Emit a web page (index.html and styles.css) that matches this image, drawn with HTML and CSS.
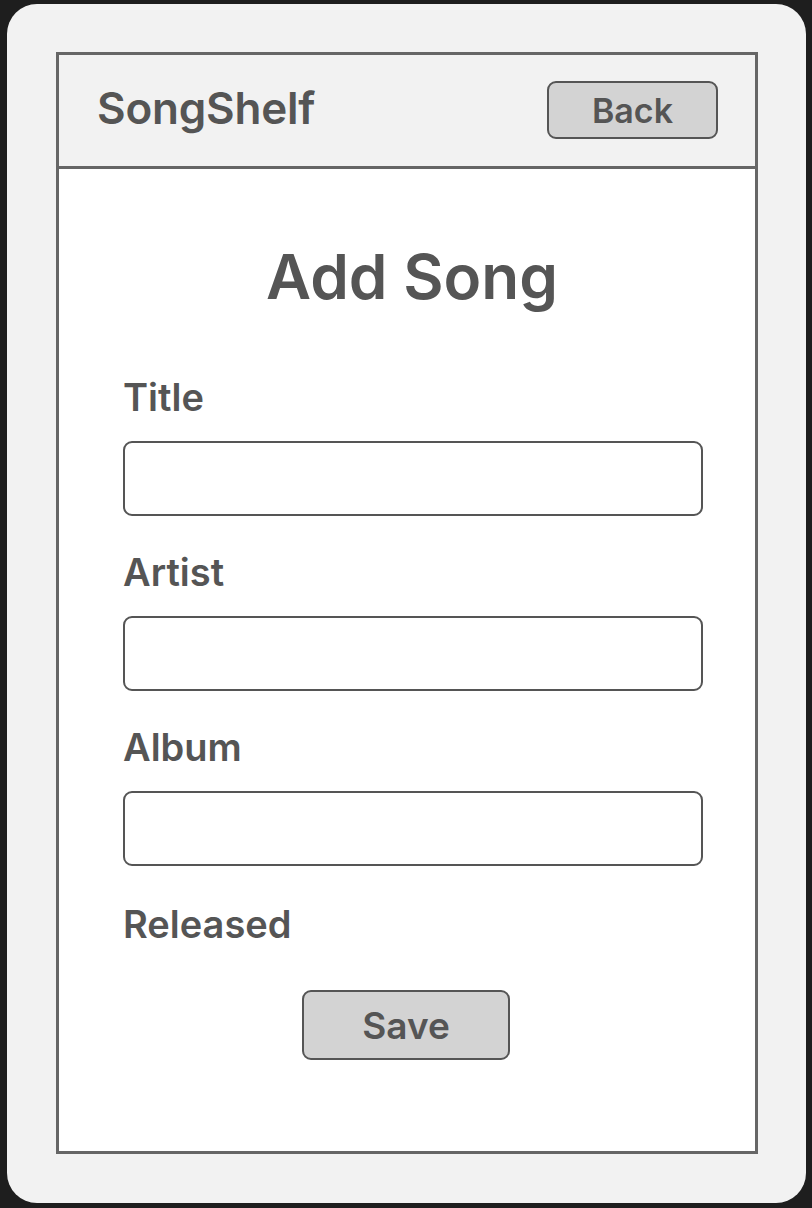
FILE: index.html
```html
<!DOCTYPE html>
<html lang="en">
<head>
<meta charset="utf-8">
<title>SongShelf - Add Song</title>
<link rel="stylesheet" href="styles.css">
</head>
<body>
<div class="device">
  <div class="frame">
    <header class="topbar">
      <span class="brand">SongShelf</span>
      <button class="btn btn-back" type="button">Back</button>
    </header>
    <main class="content">
      <h1 class="page-title">Add Song</h1>
      <form class="song-form">
        <label class="field-label" for="title">Title</label>
        <input class="field-input" id="title" type="text">
        <label class="field-label" for="artist">Artist</label>
        <input class="field-input" id="artist" type="text">
        <label class="field-label" for="album">Album</label>
        <input class="field-input" id="album" type="text">
        <label class="field-label field-label-last">Released</label>
        <div class="actions">
          <button class="btn btn-save" type="button">Save</button>
        </div>
      </form>
    </main>
  </div>
</div>
</body>
</html>
```

FILE: styles.css
```css
* { box-sizing: border-box; }
html, body { margin: 0; padding: 0; }
body {
  background: #1e1e1e;
  width: 812px;
  height: 1208px;
  font-family: Inter, "Noto Sans", "Liberation Sans", sans-serif;
  color: #555;
  padding: 4px 6px 5px 7px;
}
.device {
  background: #f2f2f2;
  border-radius: 30px;
  height: 1199px;
  padding: 48px 48px 49px 49px;
}
.frame {
  border: 3px solid #666;
  height: 1102px;
  background: #fff;
  display: flex;
  flex-direction: column;
}
.topbar {
  background: #f2f2f2;
  border-bottom: 3px solid #666;
  height: 114px;
  display: flex;
  align-items: center;
  justify-content: space-between;
  padding: 0 37px 0 38px;
}
.brand {
  font-size: 44px;
  font-weight: 600;
  letter-spacing: -0.2px;
  margin-top: -6px;
}
.btn {
  font-family: inherit;
  color: #555;
  background: #d3d3d3;
  border: 2px solid #555;
  border-radius: 9px;
  font-weight: 600;
  padding: 0;
}
.btn-back {
  width: 171px;
  height: 58px;
  font-size: 34px;
  margin-top: -1px;
}
.content {
  padding: 0 52px 0 64px;
}
.page-title {
  margin: 76px 0 0 0;
  font-size: 62px;
  font-weight: 600;
  text-align: center;
  line-height: 64px;
  padding-right: 2px;
}
.song-form {
  display: flex;
  flex-direction: column;
  margin-top: 68px;
}
.field-label {
  font-size: 38px;
  font-weight: 600;
  line-height: 40px;
}
.field-label-last {
  margin-top: 2px;
}
.field-input {
  margin: 24px 0 36px 0;
  height: 75px;
  width: 580px;
  border: 2px solid #555;
  border-radius: 9px;
  background: #fff;
}
.actions {
  display: flex;
  justify-content: center;
  margin-top: 46px;
  padding-right: 14px;
}
.btn-save {
  width: 208px;
  height: 70px;
  font-size: 37px;
}
```
